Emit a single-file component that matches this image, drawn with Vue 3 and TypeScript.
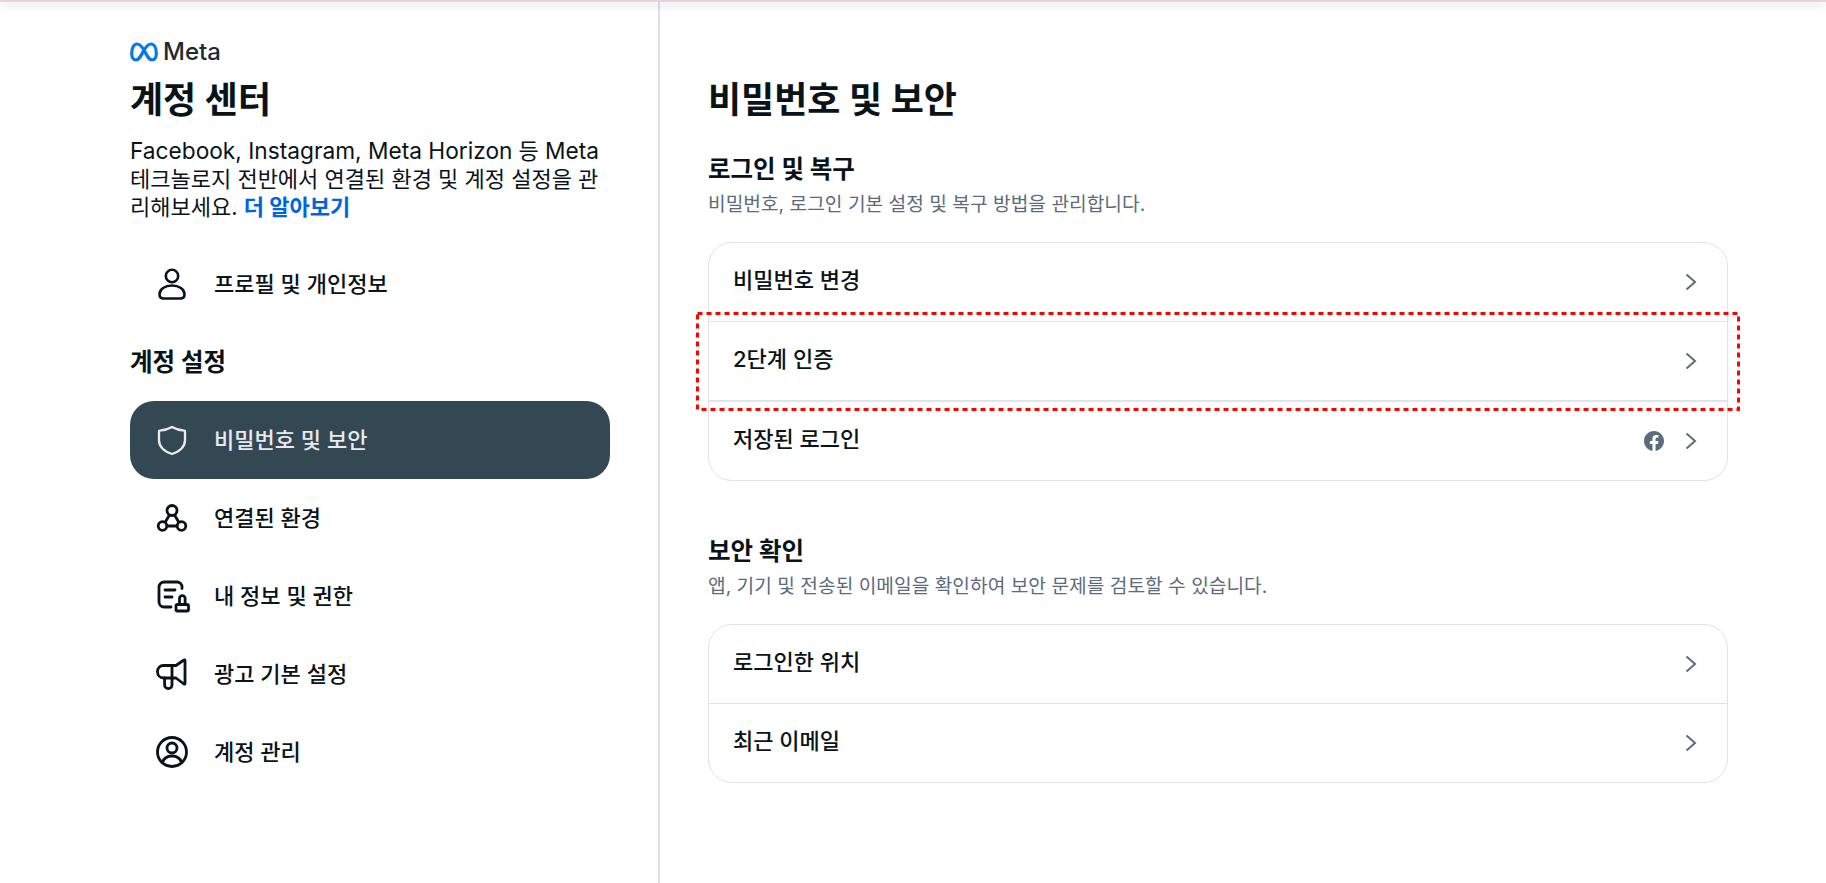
<template>
  <div class="page">
    <div class="topline"></div>
    <div class="layout">
      <aside class="side">
        <div class="logo">
          <svg class="logo-mark" width="28" height="20" viewBox="0 0 28 20" fill="none">
            <path d="M14 8C11.500 4 9.500 2 7 2 3.700 2 1.700 6 1.700 11.500 1.700 15.500 3.500 18 6 18 8.500 18 10 16 14 8 16.500 4 18.500 2 21 2 24.300 2 26.300 6 26.300 11.500 26.300 15.500 24.500 18 22 18 19.500 18 18 16 14 8z" stroke="#0677ee" stroke-width="3.200" stroke-linejoin="round" />
          </svg>
          <span class="logo-text">Meta</span>
        </div>
        <h1 class="title">계정 센터</h1>
        <p class="desc"><span class="latin">Facebook, Instagram, Meta Horizon</span> 등 <span class="latin">Meta</span> 테크놀로지 전반에서 연결된 환경 및 계정 설정을 관리해보세요. <a class="link">더 알아보기</a></p>

        <div class="nav-item profile">
          <svg class="nav-icon" viewBox="0 0 36 36" v-html="icons.person"></svg>
          <span class="nav-label">프로필 및 개인정보</span>
        </div>

        <h2 class="side-head">계정 설정</h2>

        <div v-for="item in navItems" :key="item.label" class="nav-item" :class="{ active: item.active }">
          <svg class="nav-icon" viewBox="0 0 36 36" v-html="icons[item.icon]"></svg>
          <span class="nav-label">{{ item.label }}</span>
        </div>
      </aside>

      <main class="main">
        <h1 class="title main-title">비밀번호 및 보안</h1>

        <section v-for="sec in sections" :key="sec.title" class="section">
          <h2 class="sec-title">{{ sec.title }}</h2>
          <p class="sec-sub">{{ sec.sub }}</p>
          <div class="card">
            <div v-for="(row, i) in sec.rows" :key="row.label" class="row" :class="{ first: i === 0, thick: row.thick }">
              <span class="row-label">{{ row.label }}</span>
              <svg v-if="row.fb" class="fb" width="20" height="20" viewBox="0 0 24 24">
                <path fill="#5d6c7b" d="M24 12.073c0-6.627-5.373-12-12-12s-12 5.373-12 12c0 5.990 4.388 10.954 10.125 11.854v-8.385H7.078v-3.470h3.047V9.430c0-3.007 1.792-4.669 4.533-4.669 1.312 0 2.686.235 2.686.235v2.953H15.830c-1.491 0-1.956.925-1.956 1.874v2.250h3.328l-.532 3.470h-2.796v8.385C19.612 23.027 24 18.062 24 12.073z" />
              </svg>
              <svg class="chev" width="12" height="18" viewBox="0 0 12 18" fill="none">
                <path d="M1.500 1.500 10 9l-8.500 7.500" stroke="#5d6c7b" stroke-width="2" />
              </svg>
            </div>
            <!-- 빨간 점선 강조 표시 -->
            <svg v-if="sec.highlight" class="highlight" width="1044" height="99" viewBox="0 0 1044 99" fill="none">
              <rect x="1.500" y="1.500" width="1041" height="96" stroke="#f00" stroke-width="3" stroke-dasharray="5 4" />
            </svg>
          </div>
        </section>
      </main>
    </div>
  </div>
</template>

<script setup lang="ts">
const icons: Record<string, string> = {
  person: '<g fill="none" stroke="currentColor" stroke-width="2.6"><circle cx="18" cy="10" r="6.200"/><path d="M18 19.500c-7 0-12.500 3.700-12.500 8.800 0 2.800 1.700 4.200 4.300 4.200h16.400c2.600 0 4.300-1.400 4.300-4.200 0-5.100-5.500-8.800-12.500-8.800z"/></g>',
  shield: '<path fill="none" stroke="currentColor" stroke-width="2.300" stroke-linejoin="round" d="M18 5c3.800 2.200 8 3.400 12.500 3.700.5 0 .5.4.5.8v8.500c0 6.800-5.500 11.500-13 14-7.500-2.500-13-7.200-13-14V9.500c0-.4 0-.8.5-.8C10 8.400 14.200 7.200 18 5z"/>',
  network: '<g fill="none" stroke="currentColor" stroke-width="2.800"><circle cx="18" cy="10.500" r="5"/><circle cx="8.500" cy="26" r="4.300"/><circle cx="27.500" cy="26" r="4.300"/><path d="M15.500 15 11 22.500M20.500 15 25 22.500M12.800 26h10.400"/></g>',
  docLock: '<g fill="none" stroke="currentColor" stroke-width="2.800" stroke-linecap="round"><path d="M28 10.500V9a5 5 0 0 0-5-5H10a5 5 0 0 0-5 5v15a5 5 0 0 0 5 5h7"/><path d="M11 12h10M11 19h7"/><path d="M25.500 26v-5.500a2.800 2.800 0 1 1 5.600 0V26"/><rect x="22" y="26.500" width="12.500" height="6.500" rx="1.500"/></g>',
  megaphone: '<g fill="none" stroke="currentColor" stroke-width="2.800" stroke-linejoin="round" stroke-linecap="round"><path d="M31 4.500v23c0 .6-.6.9-1.100.5L22 22H9.500C6 22 3.500 19.200 3.500 15.700S6 9.500 9.500 9.500H22l7.900-5.500c.5-.4 1.100-.1 1.100.5z"/><path d="M18 9.500V29a3.700 3.700 0 0 1-7.400 0v-7"/></g>',
  account: '<g fill="none" stroke="currentColor" stroke-width="2.800"><circle cx="18" cy="18" r="14.500"/><circle cx="18" cy="14" r="5"/><path d="M8.500 28.500c1.200-4 4.800-6.500 9.500-6.500s8.300 2.500 9.500 6.500"/></g>'
}

const navItems = [
  { label: '비밀번호 및 보안', icon: 'shield', active: true },
  { label: '연결된 환경', icon: 'network' },
  { label: '내 정보 및 권한', icon: 'docLock' },
  { label: '광고 기본 설정', icon: 'megaphone' },
  { label: '계정 관리', icon: 'account' }
]

type Row = { label: string; fb?: boolean; thick?: boolean }
type Section = { title: string; sub: string; highlight?: boolean; rows: Row[] }

const sections: Section[] = [
  {
    title: '로그인 및 복구',
    sub: '비밀번호, 로그인 기본 설정 및 복구 방법을 관리합니다.',
    highlight: true,
    rows: [
      { label: '비밀번호 변경' },
      { label: '2단계 인증' },
      { label: '저장된 로그인', fb: true, thick: true }
    ]
  },
  {
    title: '보안 확인',
    sub: '앱, 기기 및 전송된 이메일을 확인하여 보안 문제를 검토할 수 있습니다.',
    rows: [{ label: '로그인한 위치' }, { label: '최근 이메일' }]
  }
]
</script>

<style>
html, body {
  margin: 0;
  background: #fff;
}
</style>

<style scoped>
.page {
  height: 883px;
  display: flex;
  flex-direction: column;
  overflow: hidden;
  color: #0a1317;
  font-family: Inter, "Noto Sans CJK KR", sans-serif;
}
.topline {
  height: 2px;
  flex: none;
  position: relative;
  z-index: 1;
  background: #ecd3d7;
  box-shadow: 0 3px 9px rgba(90, 100, 120, 0.35);
}
.layout {
  flex: 1;
  display: flex;
}
.side {
  width: 480px;
  flex: none;
  padding: 39px 48px 0 130px;
  border-right: 2px solid #dcdfe6;
}
.logo {
  display: flex;
  align-items: center;
  gap: 5px;
  height: 22px;
}
.logo-text {
  font-family: Inter, sans-serif;
  font-size: 24px;
  font-weight: 500;
  color: #1c2b33;
  margin-bottom: 2px;
}
.title {
  margin: 0;
  font-size: 36px;
  font-weight: 700;
  line-height: 46px;
}
.side .title {
  margin-top: 14px;
}
.desc {
  margin: 14px 0 0;
  font-size: 22px;
  line-height: 28px;
}
.latin {
  font-size: 22.700px;
  line-height: 1;
}
.link {
  color: #0064e0;
  font-weight: 700;
}
.nav-item {
  display: flex;
  align-items: center;
  gap: 24px;
  height: 78px;
  padding-left: 24px;
  width: 456px;
  border-radius: 24px;
  font-size: 22px;
  font-weight: 500;
}
.nav-label {
  margin-bottom: 5px;
}
.nav-icon {
  width: 36px;
  height: 36px;
  flex: none;
}
.profile {
  margin-top: 24px;
}
.side-head {
  margin: 24px 0 24px;
  font-size: 24.500px;
  font-weight: 700;
  line-height: 30px;
}
.active {
  background: #344854;
  color: #e8eaee;
}
.main {
  flex: 1;
  padding: 75px 98px 0 48px;
}
.section {
  margin-top: 31px;
}
.section + .section {
  margin-top: 55px;
}
.sec-title {
  margin: 0;
  font-size: 24.500px;
  font-weight: 700;
  line-height: 30px;
}
.sec-sub {
  margin: 8px 0 0;
  font-size: 19.200px;
  line-height: 24px;
  color: #5b6b7c;
}
.card {
  position: relative;
  margin-top: 26px;
  border: 1px solid #dfe3ea;
  border-radius: 24px;
}
.row {
  display: flex;
  align-items: center;
  height: 78px;
  padding: 0 24px;
  border-top: 1px solid #dfe3ea;
  font-size: 22px;
  font-weight: 500;
}
.row.first {
  border-top: none;
}
.row.thick {
  border-top-width: 2px;
}
.row-label {
  flex: 1;
  margin-bottom: 9px;
}
.fb {
  margin-right: 21px;
}
.chev {
  margin-right: 6px;
}
.highlight {
  position: absolute;
  left: -13px;
  top: 69px;
  pointer-events: none;
}
</style>
